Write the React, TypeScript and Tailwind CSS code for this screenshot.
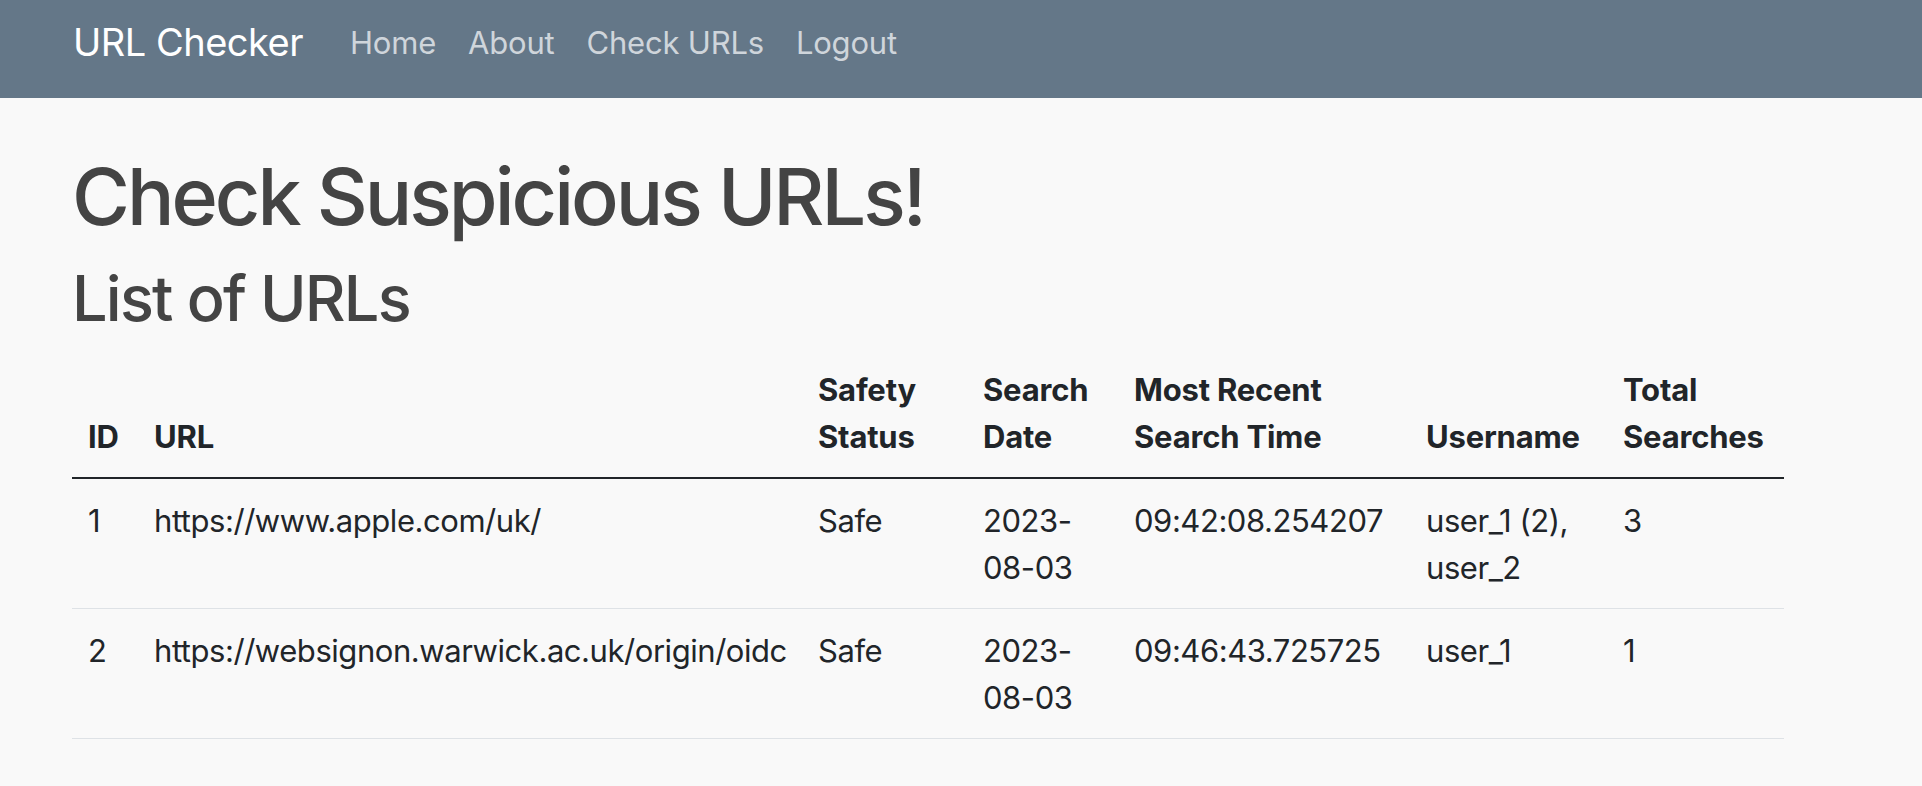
import React from "react";

const rows = [
  {
    id: "1",
    url: "https://www.apple.com/uk/",
    status: "Safe",
    date: "2023-08-03",
    time: "09:42:08.254207",
    user: "user_1 (2), user_2",
    total: "3",
  },
  {
    id: "2",
    url: "https://websignon.warwick.ac.uk/origin/oidc",
    status: "Safe",
    date: "2023-08-03",
    time: "09:46:43.725725",
    user: "user_1",
    total: "1",
  },
];

const headers = [
  "ID",
  "URL",
  "Safety Status",
  "Search Date",
  "Most Recent Search Time",
  "Username",
  "Total Searches",
];

export default function App() {
  return (
    <div className="min-h-[786px] bg-[#f9f9f9] font-['Inter',sans-serif]">
      <nav className="bg-[#647788] pb-[14px]">
        <div className="flex h-[84px] items-center pl-[73px]">
          <span className="text-[38px] leading-[57px] tracking-[-0.5px] text-white">URL Checker</span>
          <div className="ml-[31px] flex items-center">
            {["Home", "About", "Check URLs", "Logout"].map((l) => (
              <a key={l} className="px-[16px] text-[31px] leading-[47px] tracking-[-0.2px] text-[#cfd5db]">
                {l}
              </a>
            ))}
          </div>
        </div>
      </nav>
      <main className="px-[72px] pt-[50px]">
        <h1 className="mb-[16px] text-[79px] leading-[96px] font-medium tracking-[-3px] text-[#444444]">
          Check Suspicious URLs!
        </h1>
        <h2 className="mb-[12px] text-[63px] leading-[76px] font-medium tracking-[-1.8px] text-[#444444]">
          List of URLs
        </h2>
        <table className="w-[1712px] table-fixed border-collapse text-[31px] leading-[47px] tracking-[-0.45px] text-[#212529]">
          <colgroup>
            <col className="w-[66px]" />
            <col className="w-[664px]" />
            <col className="w-[165px]" />
            <col className="w-[151px]" />
            <col className="w-[292px]" />
            <col className="w-[197px]" />
            <col className="w-[177px]" />
          </colgroup>
          <thead>
            <tr className="border-b-2 border-[#212529]">
              {headers.map((h) => (
                <th key={h} className="px-[16px] py-[17.5px] text-left align-bottom font-bold tracking-[-0.2px]">
                  {h}
                </th>
              ))}
            </tr>
          </thead>
          <tbody>
            {rows.map((r) => (
              <tr key={r.id} className="border-b border-[#dee2e6]">
                {[r.id, r.url, r.status, r.date, r.time, r.user, r.total].map((c, i) => (
                  <td key={i} className="px-[16px] py-[17.5px] align-top">
                    {c}
                  </td>
                ))}
              </tr>
            ))}
          </tbody>
        </table>
      </main>
    </div>
  );
}
